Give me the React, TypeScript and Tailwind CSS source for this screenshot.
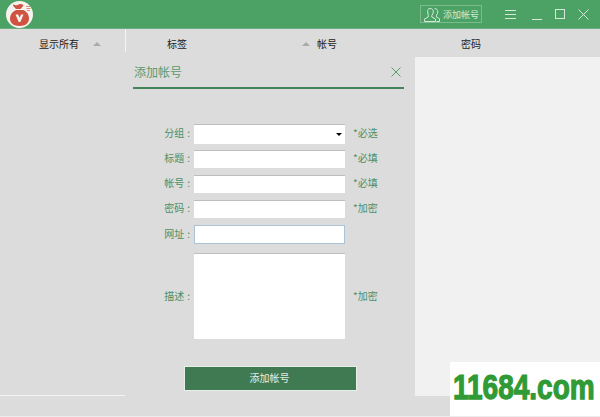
import React from 'react';

const font = { fontFamily: '"Noto Sans CJK SC", "Liberation Sans", sans-serif' };

const Logo = () => (
  <svg width="27" height="27" viewBox="0 0 27 27" className="shrink-0">
    <circle cx="13.500" cy="13.500" r="13.500" fill="#f6f3ee" />
    <path d="M7.500 3.500c1.500 1 3 1 4.500.2s3.500-1 5 0c.6.4.5 1-.1 1.500l-2.400 2.800h-4.500L7.300 5c-.5-.6-.4-1.200.2-1.500z" fill="#cf5340" />
    <path d="M10 9h7.500c3.300 1.600 5.300 4.500 5.500 7.800.2 4-1.800 8.200-9.500 8.200S3.800 20.800 4 16.800C4.200 13.500 6.500 10.600 10 9z" fill="#cf5340" />
    <path d="M9.500 13.500h2.600l1.500 3.200 1.500-3.200h2.400l-3.100 7.500h-1.700z" fill="#f6f3ee" />
    <path d="M20 5.500h4M20.500 7.500h4M21 9.500h3" stroke="#e08a78" strokeWidth="1" fill="none" />
  </svg>
);

const UsersIcon = () => (
  <svg width="18" height="15" viewBox="0 0 18 15" fill="none" stroke="#d5eadb" strokeWidth="1" className="shrink-0">
    <path d="M7 1.500c2.200 0 3.500 1.500 3.300 3.500-.1 1.500-.8 2.800-1.500 3.500v1.500l3.700 2v2.500h-11V12l3.700-2V8.500C5.500 7.800 4.800 6.500 4.700 5 4.500 3 5 1.500 7 1.500z" />
    <path d="M11.500 1.700c2-.3 3.500 1.200 3.300 3.300-.1 1.400-.7 2.500-1.300 3.200V10l3 1.800v2.700h-3" />
  </svg>
);

const WindowControls = () => (
  <div className="flex items-center">
    <svg width="11" height="11" viewBox="0 0 11 11" stroke="#d5eadb" strokeWidth="1" className="ml-[23px]">
      <path d="M0 1.500h11M0 5.500h11M0 9.500h11" />
    </svg>
    <svg width="10" height="11" viewBox="0 0 10 11" stroke="#d5eadb" strokeWidth="1" className="ml-[16px]">
      <path d="M0 10.500h10" />
    </svg>
    <svg width="10" height="10" viewBox="0 0 10 10" stroke="#d5eadb" strokeWidth="1" fill="none" className="ml-[13px]">
      <rect x=".5" y=".5" width="9" height="9" />
    </svg>
    <svg width="11" height="11" viewBox="0 0 11 11" stroke="#d5eadb" strokeWidth="1" className="ml-[13px]">
      <path d="M.5.500l10 10M10.500.500l-10 10" />
    </svg>
  </div>
);

const Caret = () => <span className="w-0 h-0 border-x-[4px] border-x-transparent border-b-[4px] border-b-[#aaaaaa]" />;

const inputClass = 'w-[151px] bg-white border-t border-t-[#bdbdbd] shrink-0';
const labelClass = 'w-[61px] pr-[4px] pb-[1px] text-right text-[10px] leading-none text-[#4d8f64] whitespace-nowrap';

const Label = ({ text }: { text: string }) => (
  <span className={labelClass}>{text}<span className="ml-[3px]">:</span></span>
);

const Row = ({ label, note, children }: { label: string; note?: string; children?: React.ReactNode }) => (
  <div className="flex items-center h-[25px]">
    <Label text={label} />
    {children}
    {note && <span className="ml-[8px] pb-[1px] text-[10px] leading-none text-[#4d8f64]">{note}</span>}
  </div>
);

export default function App() {
  return (
    <div className="relative w-[600px] h-[417px] overflow-hidden bg-[#dcdcdc] flex flex-col border-b border-b-[#ececec]" style={font}>
      <header className="h-[29px] shrink-0 flex items-center bg-[#4ca265] border-b border-b-[#6fae83] pl-[6px] pr-[11px]">
        <Logo />
        <div className="ml-auto flex items-center">
          <div className="w-[62px] h-[18px] border border-[#7cba90] flex items-center pl-[2px] gap-[2px] text-[9px] leading-none text-[#d5eadb] whitespace-nowrap">
            <UsersIcon />
            <span>添加帐号</span>
          </div>
          <WindowControls />
        </div>
      </header>

      <div className="h-[23px] shrink-0 flex text-[10px] leading-none text-[#222222]">
        <div className="w-[126px] h-full flex items-center pt-[6px] border-r border-r-[#f4f4f4] shrink-0">
          <span className="ml-[39px]">显示所有</span>
          <span className="ml-[14px] flex"><Caret /></span>
        </div>
        <div className="flex items-center pt-[6px]">
          <span className="ml-[41px]">标签</span>
          <span className="ml-[115px] flex"><Caret /></span>
          <span className="ml-[7px]">帐号</span>
          <span className="ml-[124px]">密码</span>
        </div>
      </div>

      <div className="flex flex-1 min-h-0">
        <aside className="w-[125px] shrink-0 flex flex-col justify-end pb-[20px]">
          <div className="h-px bg-[#f4f4f4]" />
        </aside>

        <main className="w-[290px] shrink-0 flex flex-col pt-[6px]">
          <div className="ml-[8px] w-[271px] h-[31px] flex items-center justify-between pl-[1px] pr-[3px] pb-[2px] border-b-2 border-b-[#43835a] text-[12px] leading-none text-[#5a9a70]">
            <span>添加帐号</span>
            <svg width="10" height="10" viewBox="0 0 10 10" stroke="#5a9a70" strokeWidth="1">
              <path d="M.5.500l9 9M9.500.500l-9 9" />
            </svg>
          </div>

          <div className="mt-[32px] ml-[8px] flex flex-col">
            <Row label="分组" note="*必选">
              <div className={`${inputClass} h-[20px] flex items-center justify-end pr-[3px]`}>
                <span className="w-0 h-0 border-x-[3px] border-x-transparent border-t-[3px] border-t-black" />
              </div>
            </Row>
            <Row label="标题" note="*必填"><div className={`${inputClass} h-[18px]`} /></Row>
            <Row label="帐号" note="*必填"><div className={`${inputClass} h-[18px]`} /></Row>
            <Row label="密码" note="*加密"><div className={`${inputClass} h-[18px]`} /></Row>
            <div className="h-[27px] flex items-center">
              <Label text="网址" />
              <div className="w-[151px] h-[19px] bg-white border border-[#a9c4d8]" />
            </div>
            <div className="mt-[5px] flex items-center">
              <Label text="描述" />
              <div className="w-[151px] h-[86px] bg-white border-t border-t-[#bdbdbd]" />
              <span className="ml-[8px] pb-[1px] text-[10px] leading-none text-[#4d8f64]">*加密</span>
            </div>
          </div>

          <button className="mt-[27px] ml-[59px] w-[173px] h-[25px] pr-[2px] pb-[1px] bg-[#3f7a52] border border-[#e8eee9] text-[10px] leading-none text-[#e4efe7]">
            添加帐号
          </button>
        </main>

        <section className="flex-1 flex flex-col pt-[5px]">
          <div className="h-[339px] bg-[#f1f1f1]" />
        </section>
      </div>

      <div className="absolute left-[450px] top-[362px] w-[150px] h-[54px] bg-white pl-[3px] pt-[8px]">
        <div className="origin-top-left scale-y-125 text-[28px] leading-[28px] font-bold text-[#2f9a36] whitespace-nowrap [-webkit-text-stroke:1px_#2f9a36]" style={{ fontFamily: '"Liberation Sans", sans-serif' }}>
          11684.com
        </div>
      </div>
    </div>
  );
}
